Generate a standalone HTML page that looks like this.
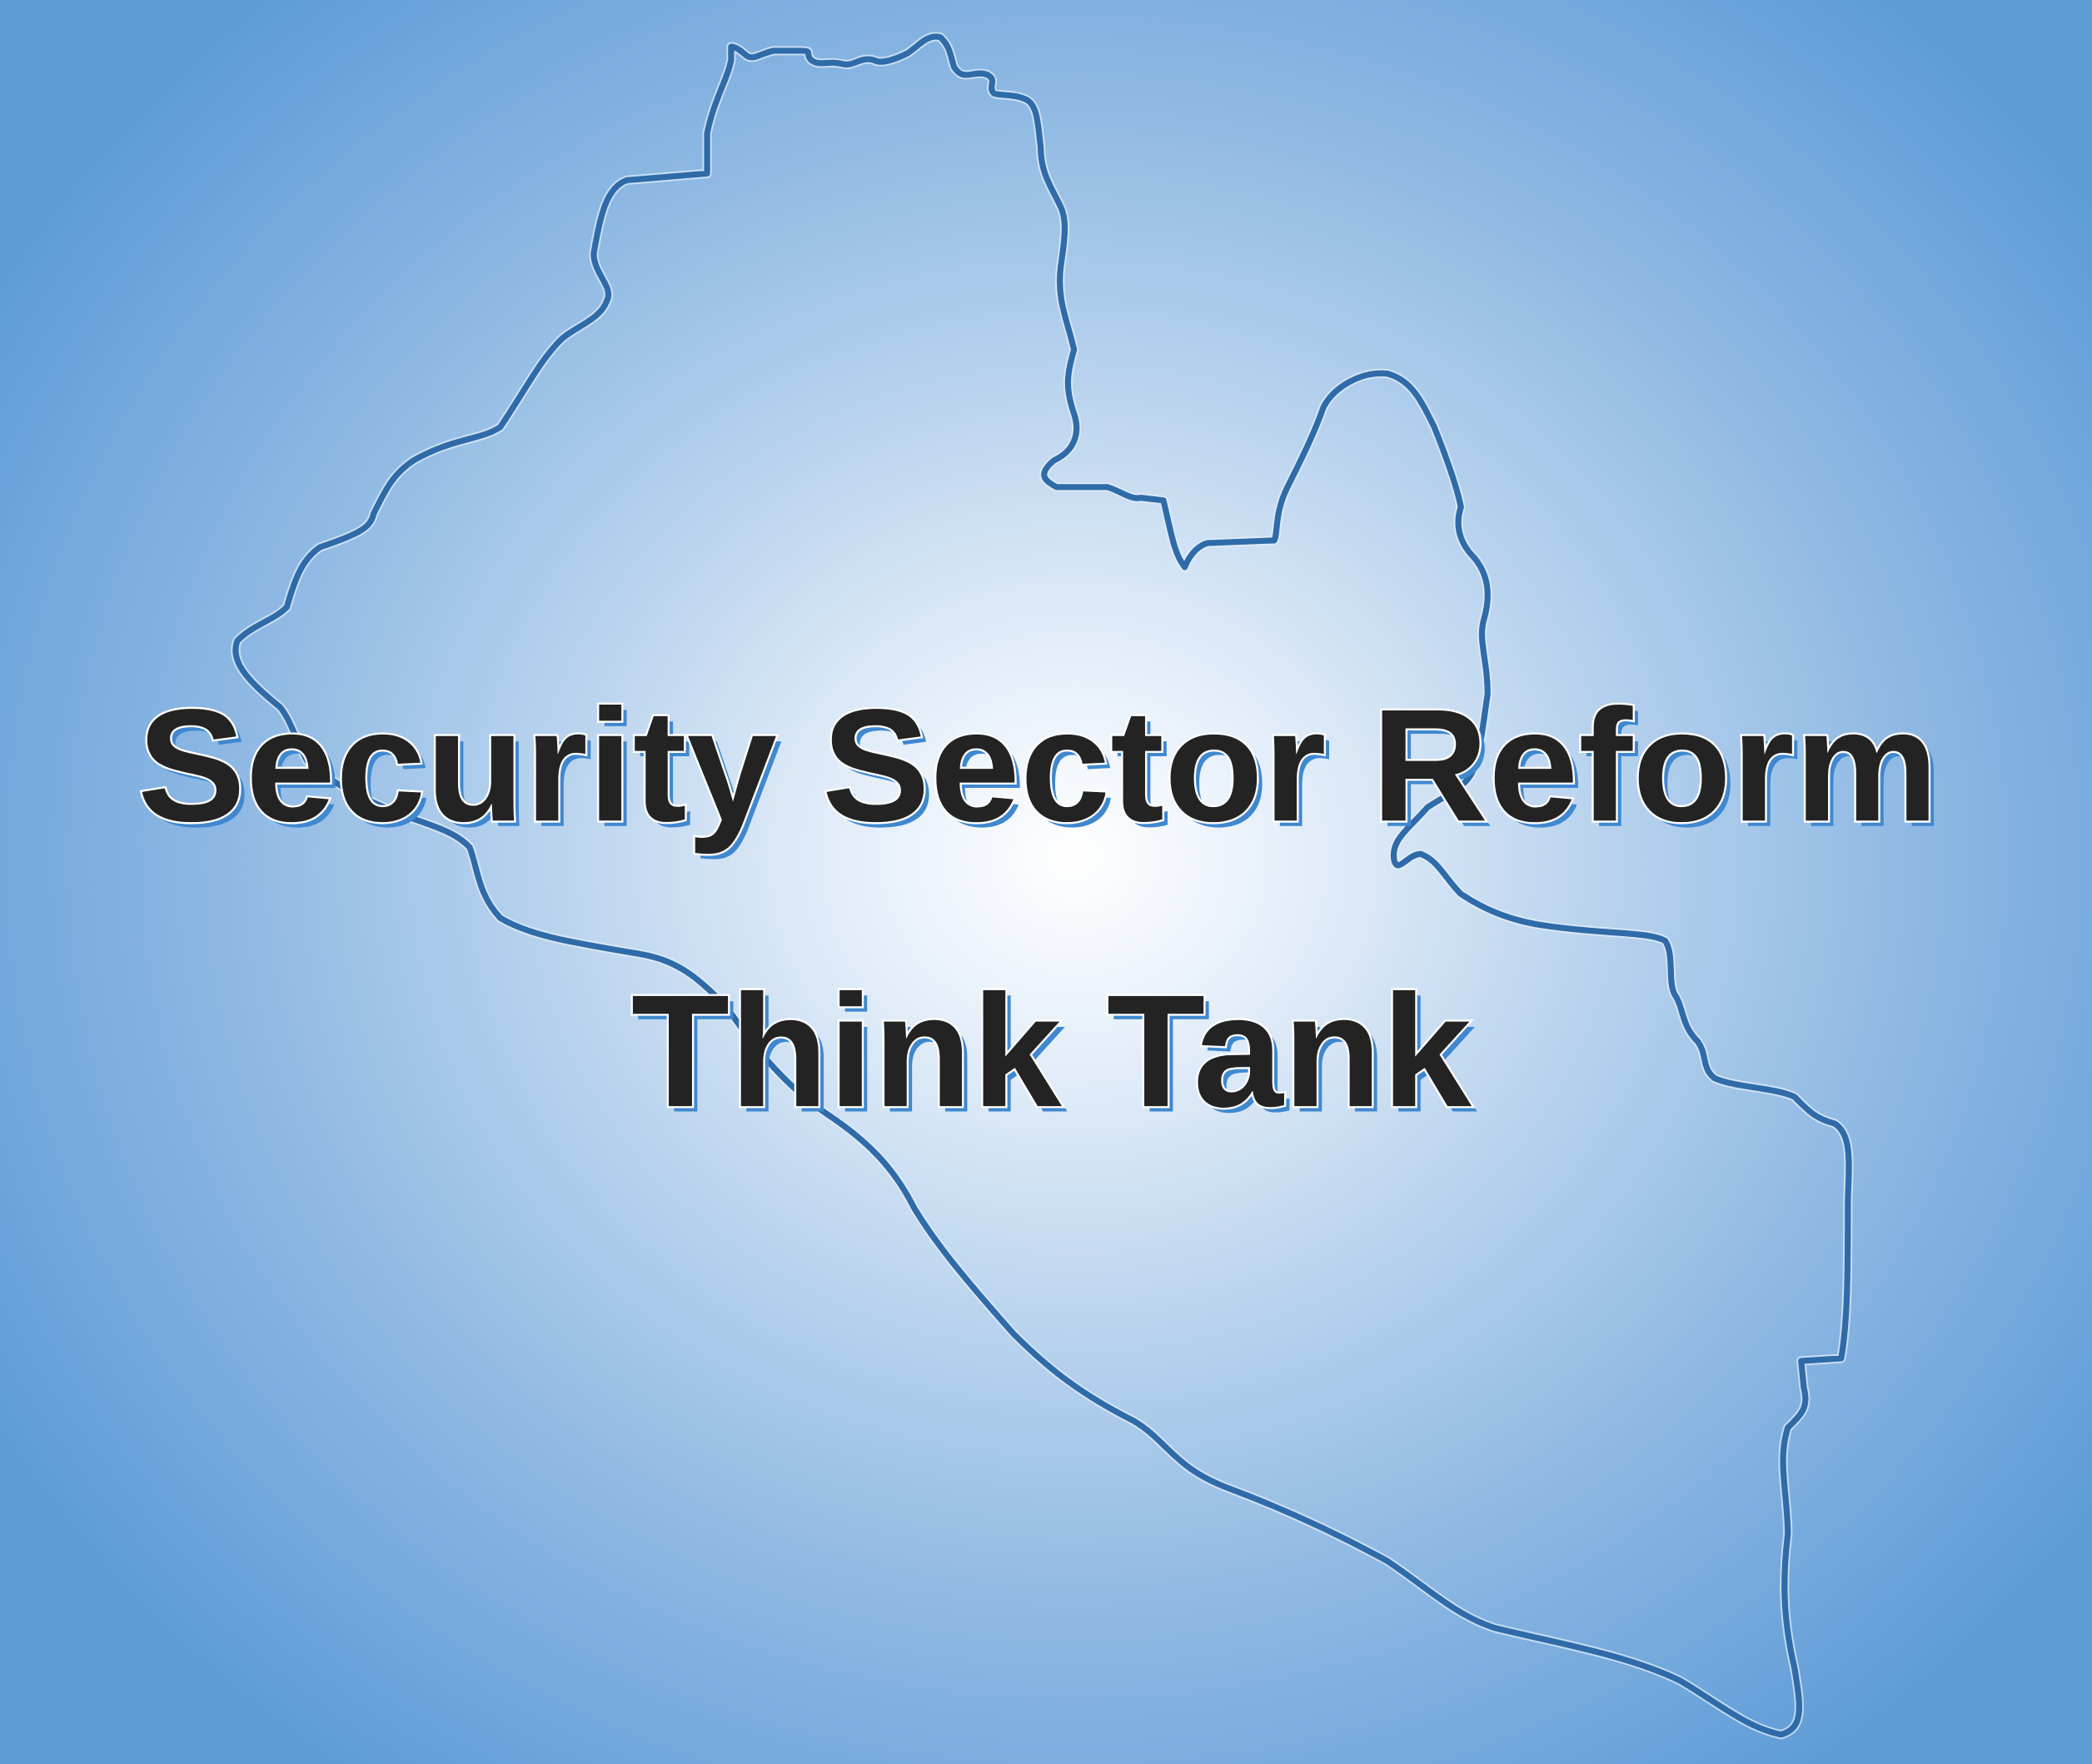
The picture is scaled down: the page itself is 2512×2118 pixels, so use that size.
<!DOCTYPE html>
<html><head><meta charset="utf-8"><style>
html,body{margin:0;padding:0}
body{width:2512px;height:2118px;overflow:hidden;background:radial-gradient(ellipse 1500px 1350px at 1290px 1030px,#ffffff 0%,#e4eef9 18%,#b9d3ee 42%,#8db8e3 68%,#5f9cd7 100%);}
svg{position:absolute;left:0;top:0}
</style></head><body>
<svg width="2512" height="2118" viewBox="0 0 1568 1322">
<defs>
<path id="m" d="M548,35 L548,45 C545,60 535,75 530,100 L530,130 L470,135 C455,140 450,160 445,190 C445,205 460,215 455,225 C450,240 430,245 420,255 C405,270 395,290 375,320 C360,330 340,328 310,345 C295,355 290,365 280,385 C278,395 270,400 240,410 C228,418 222,430 215,455 C205,465 190,468 178,480 C172,495 185,510 210,530 C218,540 222,555 230,570 C245,585 270,598 300,610 C320,618 340,622 352,635 C358,650 358,670 375,688 C395,700 420,705 480,715 C510,720 525,735 545,755 C565,785 590,815 620,835 C650,855 670,875 685,905 C700,930 720,955 760,1000 C785,1025 810,1045 850,1065 C875,1080 880,1100 920,1115 C960,1130 1000,1148 1040,1170 C1070,1190 1090,1210 1120,1220 C1160,1230 1220,1240 1260,1260 C1290,1278 1310,1295 1335,1300 C1352,1295 1350,1280 1345,1250 C1338,1220 1335,1190 1340,1150 C1340,1120 1332,1095 1340,1070 C1350,1060 1356,1055 1352,1040 L1350,1020 L1380,1018 C1385,990 1385,950 1385,900 C1386,870 1388,850 1375,842 C1360,838 1355,832 1345,822 C1330,815 1300,815 1285,808 C1275,800 1280,790 1272,780 C1260,768 1262,755 1255,745 C1250,735 1255,715 1248,705 C1235,698 1200,700 1160,694 C1130,690 1110,680 1095,670 C1083,658 1078,645 1065,640 C1055,640 1048,655 1045,645 C1042,630 1055,622 1070,605 C1085,595 1100,590 1105,575 C1110,560 1112,540 1115,520 C1115,495 1108,480 1112,465 C1118,445 1115,430 1105,418 C1095,408 1090,395 1095,380 C1092,365 1085,345 1075,320 C1065,300 1058,285 1040,280 C1020,278 1000,290 992,305 C985,325 975,345 965,365 C955,385 958,400 955,405 L905,407 C895,410 890,420 888,425 C880,415 878,400 872,375 L855,373 C848,375 840,368 830,365 L792,365 C782,360 778,355 790,345 C805,338 810,325 805,310 C798,290 800,280 805,262 C800,240 792,225 795,200 C798,180 800,165 795,155 C788,140 780,130 780,110 C778,95 778,80 770,75 C760,70 750,72 745,70 C740,65 748,60 740,56 C730,52 722,62 715,50 C712,40 712,35 705,28 C695,25 688,35 680,40 C670,45 660,48 655,45 C645,42 640,50 632,48 C620,45 615,50 608,45 C603,40 610,38 600,38 L580,38 C570,40 565,45 560,42 C555,38 552,35 548,35 Z"/>
</defs>
<use href="#m" fill="none" stroke="#e6f0fa" stroke-width="7" stroke-linejoin="round" opacity="0.7"/>
<use href="#m" fill="none" stroke="#2f6ba8" stroke-width="4.5" stroke-linejoin="round"/>
<g font-family="'Liberation Sans',sans-serif" font-weight="bold" font-size="120">
<text x="107" y="619" textLength="1350" lengthAdjust="spacingAndGlyphs" fill="#3f88d0">Security Sector Reform</text>
<text x="103" y="615" textLength="1350" lengthAdjust="spacingAndGlyphs" fill="#232323" stroke="#ffffff" stroke-width="3" paint-order="stroke">Security Sector Reform</text>
<text x="477" y="833" textLength="630" lengthAdjust="spacingAndGlyphs" fill="#3f88d0">Think Tank</text>
<text x="473" y="829" textLength="630" lengthAdjust="spacingAndGlyphs" fill="#232323" stroke="#ffffff" stroke-width="3" paint-order="stroke">Think Tank</text>
</g>
</svg>
</body></html>
